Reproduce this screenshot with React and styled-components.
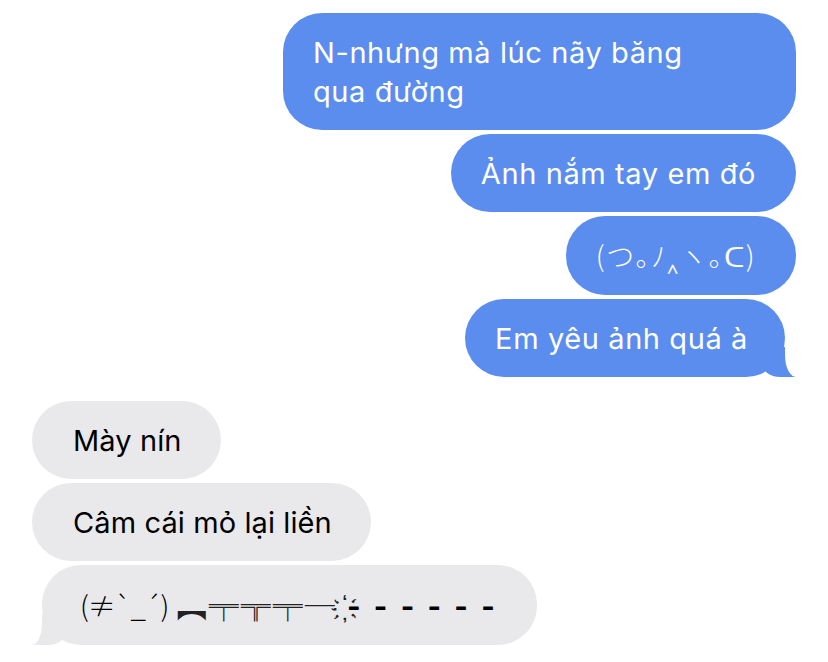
import React from "react";
import styled, { createGlobalStyle, css } from "styled-components";

const BLUE = "#5b8def";
const GRAY = "#e9e9eb";

const GlobalStyle = createGlobalStyle`
  html, body {
    margin: 0;
    padding: 0;
    background: #fff;
  }
  body {
    font-family: "Inter", "Noto Sans", "Noto Sans CJK JP", sans-serif;
    -webkit-font-smoothing: antialiased;
  }
`;

const Thread = styled.div`
  width: 828px;
  height: 662px;
  box-sizing: border-box;
  padding: 13px 32px 0 32px;
  display: flex;
  flex-direction: column;
  gap: 24px;
  overflow: hidden;
`;

const Group = styled.div`
  display: flex;
  flex-direction: column;
  gap: 4px;
  align-items: ${(p) => (p.$sent ? "flex-end" : "flex-start")};
`;

const sentTail = css`
  margin-right: 11px;
  padding-right: 37px;

  &::before {
    content: "";
    position: absolute;
    bottom: 0;
    right: -11px;
    width: 32px;
    height: 30px;
    background: ${BLUE};
    border-bottom-left-radius: 16px 10px;
  }
  &::after {
    content: "";
    position: absolute;
    bottom: 0;
    right: -30px;
    width: 30px;
    height: 32px;
    background: #fff;
    border-bottom-left-radius: 11px 22px;
  }
`;

const receivedTail = css`
  margin-left: 10px;
  padding-left: 38px;

  &::before {
    content: "";
    position: absolute;
    bottom: 0;
    left: -10px;
    width: 32px;
    height: 30px;
    background: ${GRAY};
    border-bottom-right-radius: 16px 10px;
  }
  &::after {
    content: "";
    position: absolute;
    bottom: 0;
    left: -30px;
    width: 30px;
    height: 32px;
    background: #fff;
    border-bottom-right-radius: 10px 22px;
  }
`;

const Bubble = styled.div`
  position: relative;
  box-sizing: border-box;
  width: ${(p) => p.$width || "auto"};
  padding: 19.5px 40px 19.5px 30px;
  border-radius: 39px;
  font-size: 29px;
  line-height: 39px;
  letter-spacing: 0.6px;
  white-space: nowrap;
  background: ${BLUE};
  color: #fff;

  ${(p) =>
    !p.$sent &&
    css`
      background: ${GRAY};
      color: #000;
      letter-spacing: 0.1px;
      padding-left: 41px;
      padding-right: 39px;
    `}

  ${(p) => p.$tail && (p.$sent ? sentTail : receivedTail)}
`;

const Kao = styled.span`
  font-family: "Noto Sans CJK JP", "DejaVu Sans", sans-serif;
  font-size: 28px;
  font-weight: 300;
  letter-spacing: ${(p) => p.$spacing || "0px"};
`;

const Gun = styled.span`
  font-family: "Noto Sans CJK JP", sans-serif;
  font-size: 30px;
  color: #222;
  letter-spacing: 2px;
`;

const Shots = styled.span`
  font-family: "Inter", sans-serif;
  font-weight: 700;
  letter-spacing: 3.2px;
`;

export default function App() {
  return (
    <>
      <GlobalStyle />
      <Thread>
        <Group $sent>
          <Bubble $sent $width="513px">
            N-nhưng mà lúc nãy băng
            <br />
            qua đường
          </Bubble>
          <Bubble $sent>Ảnh nắm tay em đó</Bubble>
          <Bubble $sent>
            <Kao $spacing="1.5px">(つ｡ﾉ‸ヽ｡ᑕ)</Kao>
          </Bubble>
          <Bubble $sent $tail>
            Em yêu ảnh quá à
          </Bubble>
        </Group>
        <Group>
          <Bubble>Mày nín</Bubble>
          <Bubble>Câm cái mỏ lại liền</Bubble>
          <Bubble $tail>
            <Kao $spacing="-1px">(≠`_´)</Kao> <Gun>︻╤╦╤─ ҉</Gun>
            <Shots>- - - - - -</Shots>
          </Bubble>
        </Group>
      </Thread>
    </>
  );
}
